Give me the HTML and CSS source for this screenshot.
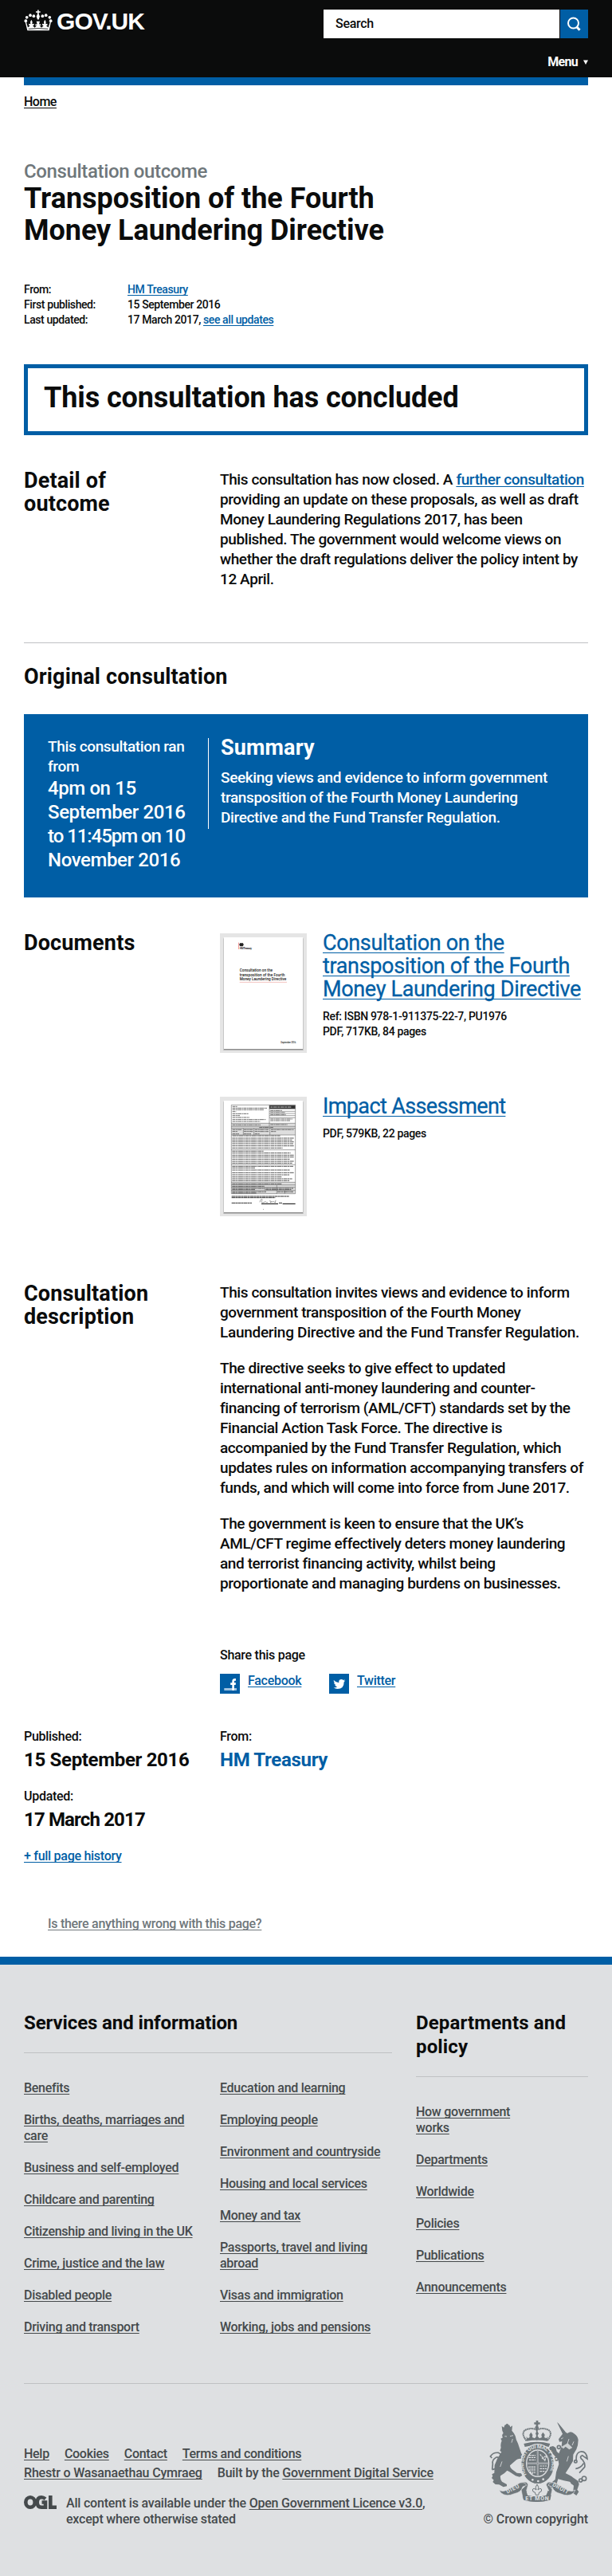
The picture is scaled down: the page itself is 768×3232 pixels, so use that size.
FILE: index.html
```html
<!DOCTYPE html>
<html lang="en">
<head>
<meta charset="utf-8">
<title>Transposition of the Fourth Money Laundering Directive - GOV.UK</title>
<link rel="stylesheet" href="styles.css">
</head>
<body>
<header class="site-header">
  <div class="header-top">
    <a class="logo" href="#">
      <svg class="crown" viewBox="90 36 108 80" aria-hidden="true">
        <g fill="#fff">
          <path d="M141 37h5v5h6v5h-6v6l4 8-4 12h-5l-4-12 4-8v-6h-6v-5h6z"/>
          <circle cx="127" cy="60" r="5.5"/><circle cx="114" cy="57" r="5.5"/><circle cx="101" cy="65" r="5.5"/><circle cx="97" cy="78" r="5.5"/>
          <circle cx="160" cy="60" r="5.5"/><circle cx="173" cy="57" r="5.5"/><circle cx="187" cy="65" r="5.5"/><circle cx="191" cy="78" r="5.5"/>
          <path d="M95 82l4 1 6 20 8-7-5-2 1-5 6 1-1-8 4-8 4 8-1 8 7-1v5l-5 2 8 8 8-10-6 2v-5l7-1-3-10h13l-3 10 7 1v5l-6-2 8 10 8-8-5-2v-5l7 1-1-8 4-8 4 8-1 8 6-1 1 5-5 2 8 7 6-20 4-1-7 32H103z"/>
        </g>
        <path d="M107 108.500Q144 104 181 108.500" fill="none" stroke="#0b0c0c" stroke-width="2.500"/>
      </svg>
      <span>GOV.UK</span>
    </a>
    <form class="search">
      <span class="search-field">Search</span>
      <span class="search-button">
        <svg viewBox="0 0 35 36" aria-hidden="true"><circle cx="16.500" cy="17" r="6.500" fill="none" stroke="#fff" stroke-width="2"/><path d="M20.500 21.500l4 4.300" stroke="#fff" stroke-width="3"/></svg>
      </span>
    </form>
  </div>
  <a class="menu" href="#">Menu <svg viewBox="0 0 6 6" aria-hidden="true"><path d="M0 .500h6L3 6z" fill="#fff"/></svg></a>
</header>

<main class="page">
  <div class="accent"></div>
  <nav class="crumbs"><a href="#">Home</a></nav>

  <p class="kicker">Consultation outcome</p>
  <h1 class="title">Transposition of the Fourth<br>Money Laundering Directive</h1>

  <dl class="meta">
    <dt>From:</dt><dd><a href="#">HM Treasury</a></dd>
    <dt>First published:</dt><dd>15 September 2016</dd>
    <dt>Last updated:</dt><dd>17 March 2017, <a href="#">see all updates</a></dd>
  </dl>

  <div class="notice"><h2 class="title">This consultation has concluded</h2></div>

  <section class="row outcome">
    <h2 class="heading">Detail of<br>outcome</h2>
    <div class="prose">
      <p>This consultation has now closed. A <a href="#">further consultation</a><br>providing an update on these proposals, as well as draft<br>Money Laundering Regulations 2017, has been<br>published. The government would welcome views on<br>whether the draft regulations deliver the policy intent by<br>12 April.</p>
    </div>
  </section>

  <h2 class="heading original">Original consultation</h2>

  <section class="panel">
    <div class="ran">
      <p>This consultation ran<br>from</p>
      <p class="dates">4pm on 15<br>September 2016<br><span class="end-time">to 11:45pm on 10</span><br>November 2016</p>
    </div>
    <div class="summary">
      <h2 class="heading">Summary</h2>
      <p>Seeking views and evidence to inform government<br>transposition of the Fourth Money Laundering<br>Directive and the Fund Transfer Regulation.</p>
    </div>
  </section>

  <section class="row documents">
    <h2 class="heading">Documents</h2>
    <div class="doc-list">
      <article class="doc">
        <svg class="thumb" viewBox="48 63 327 450" role="img" aria-label="Document cover">
          <rect x="48" y="63" width="327" height="450" fill="#e5e5e5"/>
          <rect x="61" y="82" width="301" height="422" fill="#b8b8b8"/><rect x="63" y="80" width="297" height="421" fill="#8c8c8c"/>
          <rect x="63" y="78" width="297" height="420" fill="#fff"/>
          <path d="M118.500 98v25" stroke="#e66" stroke-width="2"/>
          <path d="M123 100h12l2 6-3 6h-10l-3-6z" fill="#222"/>
          <g font-family="Roboto,sans-serif" fill="#111" font-weight="500" letter-spacing="0">
            <text x="122" y="122" font-size="10" textLength="46">HM Treasury</text>
            <text x="122" y="207" font-size="14" textLength="124">Consultation on the</text>
            <text x="122" y="224" font-size="14" textLength="170">transposition of the Fourth</text>
            <text x="122" y="240" font-size="14" textLength="176">Money Laundering Directive</text>
            <text x="277" y="477" font-size="8" textLength="57">September 2016</text>
          </g>
          <path d="M122 247h178" stroke="#eba39d" stroke-width="2"/>
        </svg>
        <div>
          <h3><a href="#">Consultation on the<br>transposition of the Fourth<br>Money Laundering Directive</a></h3>
          <p>Ref: <span>ISBN 978-1-911375-22-7</span>, PU1976<br>PDF, 717KB, 84 pages</p>
        </div>
      </article>
      <article class="doc">
        <svg class="thumb" viewBox="48 678 327 450" role="img" aria-label="Impact assessment form">
          <rect x="48" y="678" width="327" height="450" fill="#e5e5e5"/>
          <rect x="61" y="697" width="301" height="422" fill="#b8b8b8"/><rect x="63" y="695" width="297" height="421" fill="#8c8c8c"/>
          <rect x="63" y="693" width="297" height="420" fill="#fff"/>
          <rect x="91" y="778" width="241" height="44" fill="#dedede"/>
          <rect x="91" y="1000" width="241" height="43" fill="#dedede"/>
          <rect x="234" y="710" width="98" height="14" fill="#333"/>
          <path d="M238 717h78" stroke="#ccc" stroke-width="3" stroke-dasharray="9 2 14 2"/>
          <path d="M91 709h241v334H91zM234 709v80M91 778h241M91 790h241M91 797h241M91 822h241M91 878h241M91 934h241M91 1000h241M91 1010h241M91 1019h241M91 1031h241M234 733h98M234 741h98M234 749h98M234 757h98M136 797v25M176 797v25M236 797v25M262 1010v33M217 1019v12M292 1031v12" fill="none" stroke="#666" stroke-width="1.800"/>
          <path d="M95 715h18M95 721h130M95 727h118M95 734h14M95 742h60M95 749h28M95 756h64M95 764h126M95 771h104M95 784h106M238 730h44M238 738h56M238 746h58M238 762h84M238 768h74M238 783h64M196 794h54M95 802h36M138 802h34M179 802h52M240 802h86M95 809h20M138 809h34M179 809h52M240 809h20M95 818h25M138 818h27M179 818h18" stroke="#555" stroke-width="2.600" stroke-dasharray="11 1.500 6 1.200 15 1.700 4 1.200" fill="none"/>
          <path d="M95 825h180M94 834h232M94 841h226M94 848h232M94 855h230M94 863h232M94 871h190M94 883h118M94 890h220M94 898h232M94 905h232M94 913h218M94 921h232M94 928h226M94 940h230M94 946h86M94 954h218M94 964h232M94 972h216M94 980h186M94 987h226M94 994h216M94 1006h186M94 1015h122M94 1023h122M220 1023h104M94 1028h86M220 1028h98M94 1036h128M264 1036h60M94 1041h92" stroke="#555" stroke-width="3" stroke-dasharray="13 1.300 7 1.500 18 1.200 5 1.500" fill="none"/>
          <path d="M92 1053h216M92 1058h164M92 1078h76M270 1078h12" stroke="#222" stroke-width="2.800" stroke-dasharray="13 1 8 1" fill="none"/>
          <path d="M204 1081h63M284 1081h48" stroke="#000" stroke-width="3"/>
          <path d="M198 1075c2-14 13-14 8-6s4 10 10 5 4 5 12 2M234 1071q7-4 5 6c4-10 5 0 12-5l5 5 2-10M210 1102h3" fill="none" stroke="#555" stroke-width="1.600"/>
        </svg>
        <div>
          <h3 class="impact"><a href="#">Impact Assessment</a></h3>
          <p>PDF, 579KB, 22 pages</p>
        </div>
      </article>
    </div>
  </section>

  <section class="row description">
    <h2 class="heading">Consultation<br>description</h2>
    <div class="prose">
      <p>This consultation invites views and evidence to inform<br>government transposition of the Fourth Money<br><span class="loose">Laundering Directive and the Fund Transfer Regulation.</span></p>
      <p>The directive seeks to give effect to updated<br>international anti-money laundering and counter-<br>financing of terrorism (AML/CFT) standards set by the<br>Financial Action Task Force. The directive is<br>accompanied by the Fund Transfer Regulation, which<br>updates rules on information accompanying transfers of<br>funds, and which will come into force from June 2017.</p>
      <p>The government is keen to ensure that the UK’s<br>AML/CFT regime effectively deters money laundering<br>and terrorist financing activity, whilst being<br>proportionate and managing burdens on businesses.</p>
    </div>
  </section>

  <section class="share">
    <p>Share this page</p>
    <ul>
      <li>
        <svg viewBox="0 0 25 25" aria-hidden="true"><rect width="25" height="25" fill="#005ea5"/><path d="M5.300 18H21v3H5.300z" fill="#9fc3e0"/><path d="M15.300 21v-7h-2.100v-2.800h2.100V9.500Q15.300 6 18.600 6H20v2.700h-1.200q-.9 0-.9 1v1.500H20l-.3 2.800h-1.800v7z" fill="#fff"/></svg>
        <a href="#">Facebook</a>
      </li>
      <li>
        <svg viewBox="0 0 25 25" aria-hidden="true"><rect width="25" height="25" fill="#005ea5"/><path d="M5.800 8q2.700 3 6.500 3.200Q11.800 7 15.500 7q1.300 0 2.300 1l2-.8-1.300 1.800 1.900-.5-1.700 1.700Q18.700 19 10.500 19q-2.700 0-4.900-1.400 2.700.1 4.600-1.400-2.300-.3-3-2.200h1.300Q6 13 6 10.500l1.300.3Q5 9.500 5.800 8z" fill="#fff"/></svg>
        <a href="#">Twitter</a>
      </li>
    </ul>
  </section>

  <section class="row history">
    <div>
      <p>Published:</p>
      <p class="strong">15 September 2016</p>
      <p class="updated">Updated:</p>
      <p class="strong narrow">17 March 2017</p>
      <p class="full"><a href="#">+ full page history</a></p>
    </div>
    <div>
      <p>From:</p>
      <p class="strong"><a href="#">HM Treasury</a></p>
    </div>
  </section>

  <p class="problem"><a href="#">Is there anything wrong with this page?</a></p>
</main>

<footer class="footer">
  <div class="columns">
    <section>
      <h2>Services and information</h2>
      <div class="links">
        <ul>
          <li><a href="#">Benefits</a></li>
          <li><a href="#">Births, deaths, marriages and<br>care</a></li>
          <li><a href="#">Business and self-employed</a></li>
          <li><a href="#">Childcare and parenting</a></li>
          <li><a href="#">Citizenship and living in the UK</a></li>
          <li><a href="#">Crime, justice and the law</a></li>
          <li><a href="#">Disabled people</a></li>
          <li><a href="#">Driving and transport</a></li>
        </ul>
        <ul>
          <li><a href="#">Education and learning</a></li>
          <li><a href="#">Employing people</a></li>
          <li><a href="#">Environment and countryside</a></li>
          <li><a href="#">Housing and local services</a></li>
          <li><a href="#">Money and tax</a></li>
          <li><a href="#">Passports, travel and living<br>abroad</a></li>
          <li><a href="#">Visas and immigration</a></li>
          <li><a href="#">Working, jobs and pensions</a></li>
        </ul>
      </div>
    </section>
    <section>
      <h2 class="wide">Departments and<br>policy</h2>
      <ul>
        <li><a href="#">How government<br>works</a></li>
        <li><a href="#">Departments</a></li>
        <li><a href="#">Worldwide</a></li>
        <li><a href="#">Policies</a></li>
        <li><a href="#">Publications</a></li>
        <li><a href="#">Announcements</a></li>
      </ul>
    </section>
  </div>

  <div class="bottom">
    <div class="support">
      <ul>
        <li><a href="#">Help</a></li>
        <li><a href="#">Cookies</a></li>
        <li><a href="#">Contact</a></li>
        <li><a href="#">Terms and conditions</a></li>
      </ul>
      <ul class="credits">
        <li><a href="#">Rhestr o Wasanaethau Cymraeg</a></li>
        <li>Built by the <a href="#">Government Digital Service</a></li>
      </ul>
      <div class="licence">
        <svg viewBox="0 0 41 17" role="img" aria-label="Open Government Licence"><g fill="none" stroke="#454a4c" stroke-width="4.600"><ellipse cx="8" cy="8.500" rx="5.700" ry="6.200"/><path d="M27 4.300Q24.500 2.300 22 2.300q-5.300 0-5.300 6.200T22 14.700h5V8.500h-4.500M33.300 0v14.700H41"/></g></svg>
        <p>All content is available under the <a href="#">Open Government Licence v3.0</a>,<br>except where otherwise stated</p>
      </div>
    </div>
    <div class="copyright">
      <svg viewBox="99 81 375 306" aria-hidden="true">
        <g fill="#6f777b">
          <path d="M151 119l-2-17 8 5 3-9 5-2 2-3h5l1 4 5 1 3 8 8-6-2 19q8 8 13 20 2 14 10 28l12 36 8 14-4 8q-16-2-22 4l-24 21q-1 8 8 15l18 13 16 2 4 8-10 5-15-4-24-16-8-4q-10 12-25 20-2 12 6 22l18 10v7l-13 3-16-9-14-1-10-9 4-7-8-8 4-7-3-7 9-5 1-29 10-24 16-26-6-4 4-12q-3-13 3-26l-4-8 8-4q-6-9 2-17z"/>
          <path d="M357 87l6 5 27 33 6 4q14-12 27 2 12 8 14 23l-2 20-5 15-12 20-1 24-14 24-14 22q18 8 34 20l14 10 3 12-7 20 6 8-9 14-13-10 3-27-15-15-22-4-22-6-6 20-17 14-15-2-3-7 12-8 18-15 4-28 10-30-3-19-15-14-18-24 2-8 12-3 10 6 4 14 8 8 10-26 2-20-10 2-3-10 15-20z"/>
          <path d="M232 168q50-14 99 0l-5 12q-45-12-90 0z"/>
        </g>
        <g fill="none" stroke="#6f777b" stroke-width="5">
          <path d="M130 262q26-18 20-42-4-14-14-18-20-2-30 14l6 6M113 266l20-6q12-20 8-34-4-10-12-7-18 10-14 25l-2 22"/>
          <path d="M430 232q-4-30 16-34 22-2 25 27-12-8-19-13-14 6 2 18 10 12 7 26l-20 22M427 262q20-2 30-20"/>
          <circle cx="407" cy="299" r="6"/><circle cx="417" cy="313" r="6"/><circle cx="446" cy="306" r="6"/><circle cx="459" cy="299" r="8"/><circle cx="427" cy="235" r="5"/><circle cx="364" cy="181" r="6"/><circle cx="355" cy="225" r="6"/>
          <path d="M242 157q-22-28-5-40 26-12 44 0 20-12 45 0 16 14-6 40" stroke-dasharray="5 1.500" stroke-width="6"/>
          <path d="M281 95v60" stroke-width="5"/>
        </g>
        <g fill="#6f777b">
          <path d="M278 81h8v7h7v7h-7v6h-8v-6h-7v-7h7z"/><circle cx="281" cy="108" r="7"/>
          <path d="M243 158l-1-17 5 7 7-4-1-10 6-9 6 9-1 10 9 4 8-9-5-9 6-10 6 10-5 9 8 9 9-4-2-10 6-9 7 9-2 10 8 4 5-7-1 17q-39-7-78 0z"/>
        </g>
        <path d="M373 180l24-14 18 17-12 7-14-11-8 8z" fill="#dee0e2" opacity=".85"/>
        <path d="M372 150l8-4M402 150l-6 18M180 140l12-3M160 140l8 1M190 150l-4 14M420 160l-6 14M400 215l-6 20M150 235l-7 20" stroke="#dee0e2" stroke-width="2.500"/>
        <ellipse cx="284" cy="245" rx="63" ry="75" fill="#6f777b" stroke="#dee0e2" stroke-width="4"/>
        <ellipse cx="284" cy="242" rx="42" ry="50" fill="#6f777b" stroke="#dee0e2" stroke-width="4"/>
        <path d="M284 193v98M243 242h82" stroke="#dee0e2" stroke-width="5"/>
        <path d="M284 193v98M243 242h82" stroke="#6f777b" stroke-width="2"/>
        <path d="M252 212h24M250 220h26M252 229h24M293 208l20 25M318 214l-8 20M300 225l16-12M252 252q-2 26 14 30M259 252v28M266 252v30M273 252v30M292 252h26M292 262h26M292 272h22" stroke="#dee0e2" stroke-width="3.500" fill="none" stroke-dasharray="8 2"/>
        <path id="garter" d="M243 284Q226 262 234 225 245 186 284 186 324 186 335 225 343 262 320 287" fill="none"/>
        <text font-family="Roboto,sans-serif" font-size="20" font-weight="700" fill="#dee0e2"><textPath href="#garter" textLength="246">HONI SOIT QUI MAL Y PENSE</textPath></text>
        <circle cx="265" cy="304" r="4" fill="#dee0e2"/><circle cx="286" cy="309" r="4" fill="#dee0e2"/><circle cx="305" cy="302" r="4" fill="#dee0e2"/>
        <g fill="#6f777b" stroke="#dee0e2" stroke-width="2">
          <path d="M222 315q24-8 26 8l-6 22 84 0-10-22q4-16 27-8l-12 14 8 12-8 36q-50 22-102 0l-7-36 14-12z"/>
          <path d="M139 342q13 9 28 1 28-15 51-28 20-4 24 10l-14 5q-6 22-32 26-30 14-50-3z"/>
          <path d="M426 342q-13 9-28 1-26-15-48-28-22-4-26 10l14 5q8 22 32 26 30 14 50-3z"/>
        </g>
        <path d="M248 320h68q-6 12 6 28l-6 14q-34 9-70 0l-4-14q12-12 6-28z" fill="#dee0e2"/>
        <path d="M282 321q10 12 3 21 12-10 14 0 0 9-9 9l-3 10h-10l-3-10q-9 0-9-9 2-10 14 0-7-9 3-21z" fill="none" stroke="#6f777b" stroke-width="3"/>
        <path d="M228 361q54 15 107 0l-4 19q-50 14-99 0z" fill="#6f777b"/>
        <g font-family="Roboto,sans-serif" font-size="21" font-weight="700" fill="#dee0e2">
          <text x="238" y="381" textLength="88">ET MON</text>
          <text transform="translate(170 356) rotate(-27)" textLength="52">DIEU</text>
          <text transform="translate(338 326) rotate(29)" textLength="66">DROIT</text>
        </g>
      </svg>
      <p>© Crown copyright</p>
    </div>
  </div>
</footer>
</body>
</html>
```
FILE: styles.css
```css
* { box-sizing: border-box; }
body, p, h1, h2, h3, ul, dl, dd { margin: 0; padding: 0; }
body {
  background: #fff;
  color: #0b0c0c;
  font: 500 16px/20px Roboto, "Liberation Sans", sans-serif;
  letter-spacing: -0.28px;
  white-space: nowrap;
}
ul { list-style: none; }
svg { display: block; }
a { color: #005ea5; text-underline-offset: 2px; text-decoration-thickness: 1px; text-decoration-skip-ink: none; }

.site-header { height: 97px; padding: 12px 30px 0; background: #0b0c0c; color: #fff; }
.header-top { display: flex; justify-content: space-between; }
.logo { display: flex; gap: 5px; color: #fff; text-decoration: none; font: 700 30px/29px "Liberation Sans", sans-serif; letter-spacing: -0.93px; }
.crown { width: 36px; height: 27px; }
.search { display: flex; gap: 1px; width: 332px; }
.search-field { flex: 1; padding-left: 15px; background: #fff; color: #0b0c0c; line-height: 36px; }
.search-button { width: 35px; height: 36px; background: #005ea5; }
.menu { display: flex; justify-content: flex-end; align-items: center; gap: 7px; margin-top: 20px; color: #fff; font-weight: 700; letter-spacing: -0.7px; text-decoration: none; }
.menu svg { width: 6px; height: 6px; }

.page { padding: 0 30px; }
.accent { height: 10px; background: #005ea5; }
.crumbs { padding-top: 11px; letter-spacing: -0.5px; }
.crumbs a { color: #0b0c0c; }
.kicker { margin-top: 62px; color: #6f777b; font-size: 24px; line-height: 30px; letter-spacing: -0.36px; }
.title { font-size: 36px; font-weight: 700; line-height: 39.6px; letter-spacing: -0.03px; }
.meta { display: grid; grid-template-columns: 130px 1fr; margin-top: 45px; font-size: 14px; line-height: 19px; letter-spacing: -0.4px; }
.notice { height: 89px; margin-top: 46px; padding: 18px 20px; border: 5px solid #005ea5; }
.notice .title { letter-spacing: -0.11px; }

.row { display: grid; grid-template-columns: 246px 1fr; }
.heading { font-size: 27px; font-weight: 700; line-height: 29px; letter-spacing: 0.15px; }
.prose { font-size: 19px; line-height: 25px; letter-spacing: -0.4px; }
.prose p + p { margin-top: 20px; }
.loose { letter-spacing: -0.28px; }
.outcome { margin-top: 43px; }
.original { margin-top: 67px; padding-top: 28px; border-top: 1px solid #bfc1c3; }

.panel { display: grid; grid-template-columns: 201px 1fr; align-items: start; height: 230px; margin-top: 32px; padding: 28px 30px 0; background: #005ea5; color: #fff; font-size: 19px; font-weight: 500; line-height: 25px; letter-spacing: -0.36px; }
.dates { font-size: 24px; line-height: 30px; letter-spacing: -0.4px; }
.end-time { letter-spacing: -1.05px; }
.summary { height: 114px; margin-top: 2px; padding-left: 15px; border-left: 1px solid #fff; }
.summary .heading { margin: -2px 0 10px; }

.documents { margin-top: 43px; }
.doc { display: flex; gap: 20px; height: 205px; }
.thumb { width: 109px; height: 150px; margin-top: 2px; }
.doc h3 { font-size: 27px; font-weight: 400; line-height: 29px; letter-spacing: -0.34px; -webkit-text-stroke: 0.3px #005ea5; }
.doc .impact { letter-spacing: -0.62px; }
.doc a { text-underline-offset: 3px; }
.doc p { margin-top: 10px; font-size: 14px; line-height: 19px; letter-spacing: -0.32px; }

.description { margin-top: 30px; }
.share { margin: 68px 0 0 246px; }
.share ul { display: flex; margin-top: 13px; }
.share li { display: flex; gap: 10px; width: 137px; }
.share svg { width: 25px; height: 25px; }
.share a { line-height: 18px; }

.history { margin-top: 44px; }
.strong { margin-top: 4px; font-size: 24px; font-weight: 700; line-height: 30px; letter-spacing: -0.32px; }
.narrow { letter-spacing: -0.85px; }
.strong a { text-decoration: none; }
.updated, .full { margin-top: 21px; }
.problem { margin: 65px 0 0 30px; }
.problem a { color: #6f777b; }

.footer { height: 777px; margin-top: 31px; padding: 58px 30px 0; border-top: 10px solid #005ea5; background: #dee0e2; color: #454a4c; }
.footer a { color: #454a4c; }
.columns { display: grid; grid-template-columns: 462px 216px; gap: 30px; height: 468px; border-bottom: 1px solid #bfc1c3; }
.footer h2 { padding-bottom: 22px; border-bottom: 1px solid #bfc1c3; color: #0b0c0c; font-size: 24px; line-height: 30px; letter-spacing: -0.1px; }
.footer .wide { letter-spacing: 0.15px; }
.columns ul { display: grid; gap: 20px; margin-top: 34px; align-content: start; }
.links { display: grid; grid-template-columns: 246px 1fr; }
.bottom { display: flex; justify-content: space-between; padding-top: 46px; }
.support { padding-top: 30px; }
.support ul { display: flex; gap: 19px; line-height: 24px; }
.support .credits { letter-spacing: -0.18px; }
.licence { display: flex; gap: 12px; margin-top: 16px; letter-spacing: -0.2px; }
.licence svg { width: 41px; height: 17px; }
.copyright { display: flex; flex-direction: column; align-items: flex-end; letter-spacing: -0.12px; }
.copyright svg { width: 125px; height: 102px; }
.copyright p { margin-top: 12px; }
```
